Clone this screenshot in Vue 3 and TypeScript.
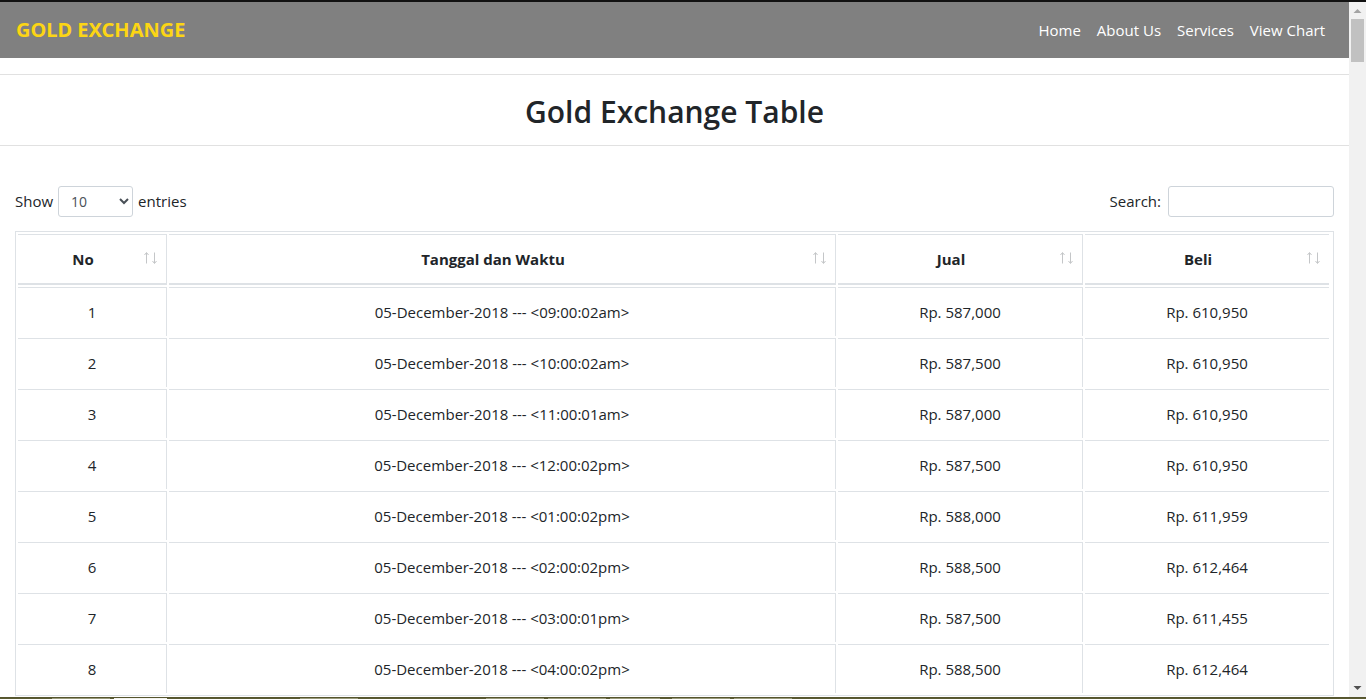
<script setup lang="ts">
import { computed, ref } from 'vue'

interface Rate {
  no: number
  time: string
  sell: string
  buy: string
}

const links: string[] = ['Home', 'About Us', 'Services', 'View Chart']
const columns: string[] = ['No', 'Tanggal dan Waktu', 'Jual', 'Beli']
const sizes: number[] = [10, 25, 50, 100]

const pageSize = ref<number>(10)
const query = ref<string>('')

const rates: Rate[] = [
  { no: 1, time: '09:00:02am', sell: '587,000', buy: '610,950' },
  { no: 2, time: '10:00:02am', sell: '587,500', buy: '610,950' },
  { no: 3, time: '11:00:01am', sell: '587,000', buy: '610,950' },
  { no: 4, time: '12:00:02pm', sell: '587,500', buy: '610,950' },
  { no: 5, time: '01:00:02pm', sell: '588,000', buy: '611,959' },
  { no: 6, time: '02:00:02pm', sell: '588,500', buy: '612,464' },
  { no: 7, time: '03:00:01pm', sell: '587,500', buy: '611,455' },
  { no: 8, time: '04:00:02pm', sell: '588,500', buy: '612,464' },
]

const visible = computed<Rate[]>(() =>
  rates
    .filter((r) => `${r.no} ${r.time} ${r.sell} ${r.buy}`.includes(query.value))
    .slice(0, pageSize.value),
)
</script>

<template>
  <div class="window">
    <div class="view">
      <div class="page">
        <nav class="navbar">
          <a class="brand" href="#">GOLD EXCHANGE</a>
          <ul class="links">
            <li v-for="link in links" :key="link"><a href="#">{{ link }}</a></li>
          </ul>
        </nav>

        <h2 class="title">Gold Exchange Table</h2>

        <main class="content">
          <div class="controls">
            <label class="control" for="page-size">
              Show
              <select id="page-size" v-model.number="pageSize" class="field size">
                <option v-for="s in sizes" :key="s" :value="s">{{ s }}</option>
              </select>
              entries
            </label>
            <label class="control search-label" for="search">
              Search:
              <input id="search" v-model="query" class="field search" type="search" />
            </label>
          </div>

          <table class="rates">
            <colgroup>
              <col class="col-no" />
              <col class="col-time" />
              <col class="col-sell" />
              <col class="col-buy" />
            </colgroup>
            <thead>
              <tr>
                <th v-for="c in columns" :key="c" scope="col">
                  {{ c }}
                  <svg class="sort" viewBox="0 0 16 14" aria-hidden="true">
                    <path d="M4.5 12.5V2M2.5 4L4.5 1.5L6.5 4M12.5 1.5V12M10.5 10L12.5 12.5L14.5 10" />
                  </svg>
                </th>
              </tr>
            </thead>
            <tbody>
              <tr v-for="r in visible" :key="r.no">
                <td>{{ r.no }}</td>
                <td>05-December-2018 --- &lt;{{ r.time }}&gt;</td>
                <td>Rp. {{ r.sell }}</td>
                <td>Rp. {{ r.buy }}</td>
              </tr>
            </tbody>
          </table>
        </main>
      </div>

      <div class="scrollbar" aria-hidden="true">
        <svg class="arrow up" viewBox="0 0 17 17"><path d="M4.5 11L8.5 7L12.5 11Z" /></svg>
        <div class="track"><div class="thumb"></div></div>
        <svg class="arrow down" viewBox="0 0 17 17"><path d="M4.5 6L8.5 10L12.5 6Z" /></svg>
      </div>
    </div>
    <div class="taskbar"></div>
  </div>
</template>

<style>
body {
  margin: 0;
  overflow: hidden;
}
</style>

<style scoped>
.window {
  display: flex;
  flex-direction: column;
  box-sizing: border-box;
  height: 100vh;
  border-top: 2px solid #111;
  background: #fff;
  color: #212529;
  font-family: 'Segoe UI', 'Open Sans', 'Noto Sans', sans-serif;
  font-size: 15px;
  line-height: 24px;
}
.view {
  display: flex;
  flex: 1;
  min-height: 0;
}
.page {
  flex: 1;
  min-width: 0;
  overflow: hidden;
}
.navbar {
  display: flex;
  align-items: center;
  justify-content: space-between;
  padding: 8px 16px;
  background: #808080;
}
.brand {
  color: #fcd514;
  font-family: 'Segoe UI', 'Noto Sans', 'Open Sans', sans-serif;
  font-size: 20px;
  font-weight: 700;
  line-height: 30px;
  text-decoration: none;
}
.links {
  display: flex;
  margin: 0;
  padding: 0;
  list-style: none;
}
.links a {
  display: block;
  padding: 8px;
  color: #fff;
  text-decoration: none;
}
.title {
  margin: 16px 0 0;
  padding: 19px 0 15px;
  border-top: 1px solid #e1e1e1;
  border-bottom: 1px solid #e1e1e1;
  font-size: 30px;
  font-weight: 600;
  line-height: 36px;
  text-align: center;
}
.content {
  padding: 40px 15px 0;
}
.controls {
  display: flex;
  justify-content: space-between;
}
.control {
  display: flex;
  align-items: flex-start;
  gap: 5px;
  line-height: 30px;
}
.search-label {
  gap: 7px;
}
.field {
  box-sizing: border-box;
  height: 31px;
  border: 1px solid #ced4da;
  border-radius: 3px;
  background: #fff;
  color: #495057;
  font-family: inherit;
  font-size: 14px;
}
.size {
  width: 75px;
  padding: 4px 8px;
}
.search {
  width: 166px;
  padding: 4px 8px;
}
.rates {
  width: 100%;
  margin-top: 14px;
  padding-right: 2px;
  border: 1px solid #dee2e6;
  border-collapse: separate;
  border-spacing: 2px;
  table-layout: fixed;
  box-sizing: border-box;
  text-align: center;
}
.col-no {
  width: 149px;
}
.col-time {
  width: 667px;
}
.col-sell {
  width: 245px;
}
th,
td {
  padding: 12px;
  border: solid #dee2e6;
  border-width: 1px 1px 0 0;
}
th {
  position: relative;
  padding-right: 30px;
  border-bottom-width: 2px;
  font-weight: 700;
}
th:last-child,
td:last-child {
  border-right-width: 0;
}
.sort {
  position: absolute;
  right: 8px;
  top: 16px;
  width: 16px;
  height: 14px;
  fill: none;
  stroke: #c4c6c8;
}
.scrollbar {
  display: flex;
  flex: none;
  flex-direction: column;
  width: 17px;
  background: #f1f1f1;
}
.arrow {
  width: 17px;
  height: 17px;
}
.up {
  fill: #a3a3a3;
}
.down {
  fill: #505050;
}
.track {
  flex: 1;
  padding: 0 2px;
}
.thumb {
  height: 43px;
  background: #c1c1c1;
}
.taskbar {
  box-sizing: border-box;
  height: 2px;
  border-top: 1px solid #55552e;
  background: linear-gradient(
    90deg,
    #5a5a32 52px,
    #9a9b7c 52px 110px,
    #5a5a32 110px 114px,
    #f2f2ee 114px 167px,
    #5a5a32 167px 300px,
    #9a9b7c 300px 358px,
    #5a5a32 358px 486px,
    #9a9b7c 486px 544px,
    #5a5a32 544px 548px,
    #9a9b7c 548px 606px,
    #5a5a32 606px 610px,
    #9a9b7c 610px 660px,
    #5a5a32 660px 672px,
    #9a9b7c 672px 730px,
    #5a5a32 730px 734px,
    #9a9b7c 734px 792px,
    #5a5a32 792px
  );
}
</style>
